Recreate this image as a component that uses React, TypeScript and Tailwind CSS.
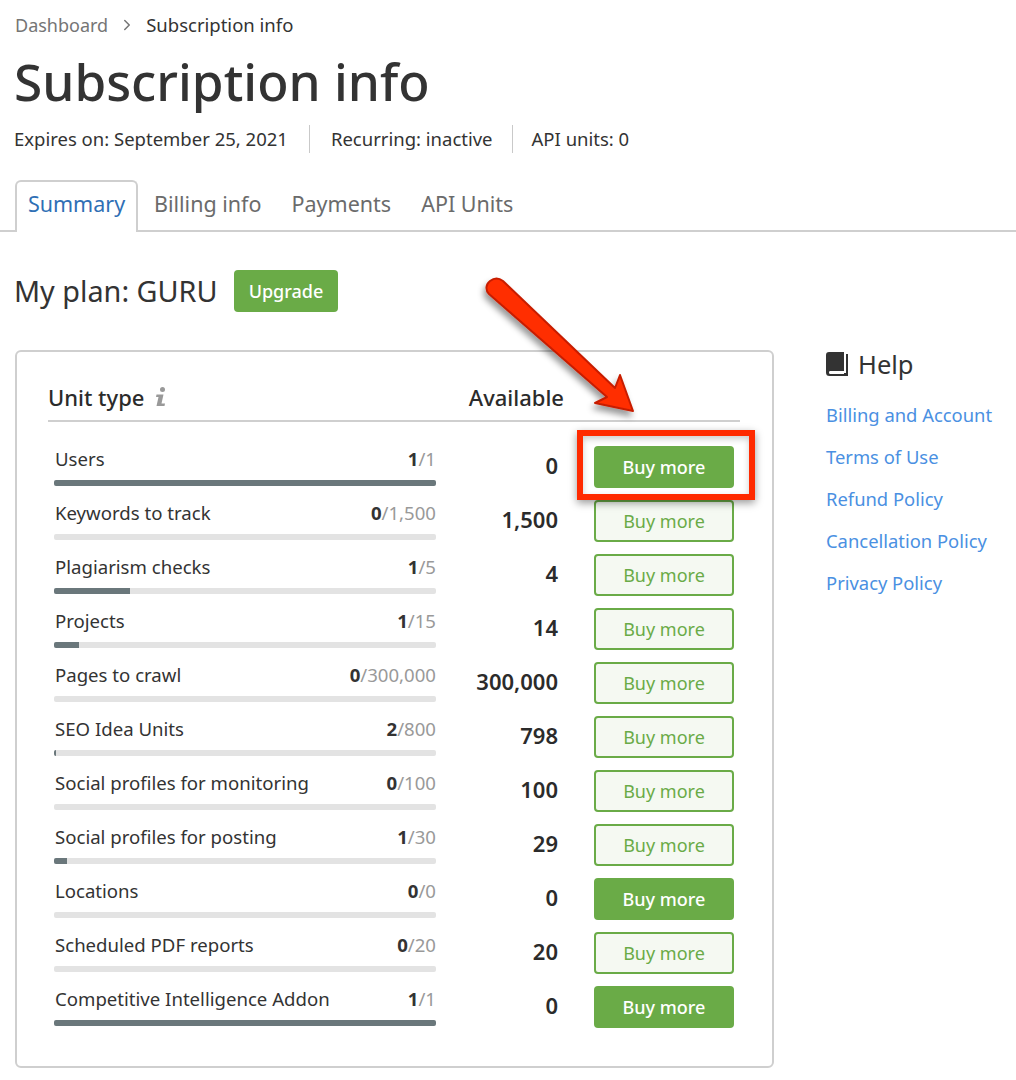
import { ChevronRight } from "lucide-react";

const rows = [
  { name: "Users", used: "1", total: "1", pct: 100, available: "0", solid: true },
  { name: "Keywords to track", used: "0", total: "1,500", pct: 0, available: "1,500", solid: false },
  { name: "Plagiarism checks", used: "1", total: "5", pct: 20, available: "4", solid: false },
  { name: "Projects", used: "1", total: "15", pct: 6.67, available: "14", solid: false },
  { name: "Pages to crawl", used: "0", total: "300,000", pct: 0, available: "300,000", solid: false },
  { name: "SEO Idea Units", used: "2", total: "800", pct: 0.4, available: "798", solid: false },
  { name: "Social profiles for monitoring", used: "0", total: "100", pct: 0, available: "100", solid: false },
  { name: "Social profiles for posting", used: "1", total: "30", pct: 3.5, available: "29", solid: false },
  { name: "Locations", used: "0", total: "0", pct: 0, available: "0", solid: true },
  { name: "Scheduled PDF reports", used: "0", total: "20", pct: 0, available: "20", solid: false },
  { name: "Competitive Intelligence Addon", used: "1", total: "1", pct: 100, available: "0", solid: true },
];

const helpLinks = ["Billing and Account", "Terms of Use", "Refund Policy", "Cancellation Policy", "Privacy Policy"];

function BuyButton({ solid }: { solid: boolean }) {
  return (
    <button
      className={
        solid
          ? "h-[42px] w-[140px] rounded-[4px] bg-[#6aab47] text-[18px] font-medium text-white"
          : "h-[42px] w-[140px] rounded-[4px] border-2 border-[#6aab47] bg-[#f5f9f2] text-[18px] text-[#6aab47]"
      }
    >
      Buy more
    </button>
  );
}

export default function App() {
  return (
    <div className="relative h-[1080px] w-[1016px] overflow-hidden bg-white font-['Noto_Sans',sans-serif] text-[#333333]">
      <div className="flex h-[50px] items-center gap-[10px] pl-[15px] text-[18px]">
        <span className="text-[#757575]">Dashboard</span>
        <ChevronRight className="h-[18px] w-[18px] text-[#757575]" />
        <span className="text-[18.5px] text-[#333333]">Subscription info</span>
      </div>
      <h1 className="h-[68px] pl-[14px] text-[51.3px] leading-[62px] font-medium text-[#333333]">Subscription info</h1>
      <div className="mt-[7px] flex h-[28px] items-center pl-[14px] text-[18.5px]">
        <span>Expires on: September 25, 2021</span>
        <span className="mx-[21px] h-[28px] w-px bg-[#c9c9c9]" />
        <span>Recurring: inactive</span>
        <span className="mx-[19px] h-[28px] w-px bg-[#c9c9c9]" />
        <span>API units: 0</span>
      </div>

      <div className="mt-[27px] flex h-[52px] items-stretch border-b-2 border-[#cfcfcf] pl-[15px] text-[21.5px] text-[#6b6b6b]">
        <div className="-mb-[2px] flex w-[123px] items-center justify-center rounded-t-[6px] border-2 border-b-0 border-[#cfcfcf] bg-white pb-[5px] text-[#2f6fb5]">
          Summary
        </div>
        <div className="ml-[16px] flex items-center pb-[2px]">Billing info</div>
        <div className="ml-[30px] flex items-center pb-[2px]">Payments</div>
        <div className="ml-[30px] flex items-center pb-[2px]">API Units</div>
      </div>

      <div className="mt-[38px] flex h-[42px] items-center pl-[14px]">
        <span className="w-[220px] text-[28.8px] text-[#333333]">My plan: GURU</span>
        <button className="h-[42px] w-[104px] rounded-[4px] bg-[#6aab47] text-[18px] font-medium text-white">Upgrade</button>
      </div>

      <div className="mt-[38px] flex items-start pl-[15px]">
        <div className="h-[718px] w-[759px] rounded-[6px] border-2 border-[#cfcfcf] pt-[26px] pl-[31px]">
          <div className="flex h-[44px] w-[692px] items-center border-b-2 border-[#cfcfcf] pb-[4px] text-[22px] font-medium">
            <span className="text-[#2b2b2b]">Unit type</span>
            <svg className="ml-[11px] h-[22px] w-[12px]" viewBox="0 0 12 22" fill="#999999">
              <circle cx="7.5" cy="3.5" r="2.5" />
              <path d="M1.5 8.5h7l-2 9h3.5l-.5 2.5H1.5l2-9H1z" />
            </svg>
            <span className="mr-[176px] ml-auto text-[#2b2b2b]">Available</span>
          </div>
          <div className="mt-[24px] flex flex-col gap-[12px] pl-[6px]">
            {rows.map((row) => (
              <div key={row.name} className="flex h-[42px] items-start">
                <div className="w-[382px]">
                  <div className="flex h-[34px] items-start justify-between pl-px text-[18.6px] leading-[26px]">
                    <span className="text-[#333333]">{row.name}</span>
                    <span>
                      <span className="font-bold text-[#333333]">{row.used}</span>
                      <span className="text-[#999999]">/{row.total}</span>
                    </span>
                  </div>
                  <div className="h-[6px] w-full overflow-hidden rounded-[2px] bg-[#e3e3e3]">
                    <div className="h-full bg-[#6a777b]" style={{ width: `${row.pct}%` }} />
                  </div>
                </div>
                <div className="flex h-[42px] w-[122px] items-center justify-end pb-[4px] text-[22px] font-semibold text-[#2b2b2b]">
                  {row.available}
                </div>
                <div className="ml-[36px]">
                  <BuyButton solid={row.solid} />
                </div>
              </div>
            ))}
          </div>
        </div>

        <div className="ml-[52px]">
          <div className="flex h-[30px] items-center gap-[10px] pb-[2px] text-[25.5px] text-[#333333]">
            <svg className="h-[24px] w-[22px]" viewBox="0 0 22 24" fill="#333333">
              <path d="M3 0h15v19H4a1.6 1.6 0 0 0 0 3h14v-1h2v3H3.5A3.5 3.5 0 0 1 0 20.5V3a3 3 0 0 1 3-3z" />
              <rect x="20" y="2" width="2" height="22" />
            </svg>
            <span>Help</span>
          </div>
          <div className="mt-[20px] flex flex-col gap-[12px] text-[18.4px] leading-[30px] text-[#4a90e2]">
            {helpLinks.map((link) => (
              <span key={link}>{link}</span>
            ))}
          </div>
        </div>
      </div>

      {/* annotation drawn over the screenshot */}
      <svg className="absolute top-[270px] left-[480px] h-[160px] w-[170px] overflow-visible" viewBox="0 0 170 160">
        <defs>
          <filter id="arrow-shadow" x="-20%" y="-20%" width="150%" height="150%">
            <feDropShadow dx="-2" dy="5" stdDeviation="3" floodColor="#000000" floodOpacity="0.4" />
          </filter>
        </defs>
        <path
          d="M9 24 C5 20 6 14 10 11 C14 8 19 8 23 11 L135 118 L140 105 L153 141 L115 133 L127 127 Z"
          fill="#ff2d00"
          stroke="#c71f00"
          strokeWidth="2"
          strokeLinejoin="round"
          filter="url(#arrow-shadow)"
        />
      </svg>
      <div className="absolute top-[430px] left-[577px] h-[70px] w-[178px] border-[6px] border-[#ff2a00] shadow-[0_3px_8px_rgba(0,0,0,0.4),inset_0_3px_6px_rgba(0,0,0,0.2)]" />
    </div>
  );
}
